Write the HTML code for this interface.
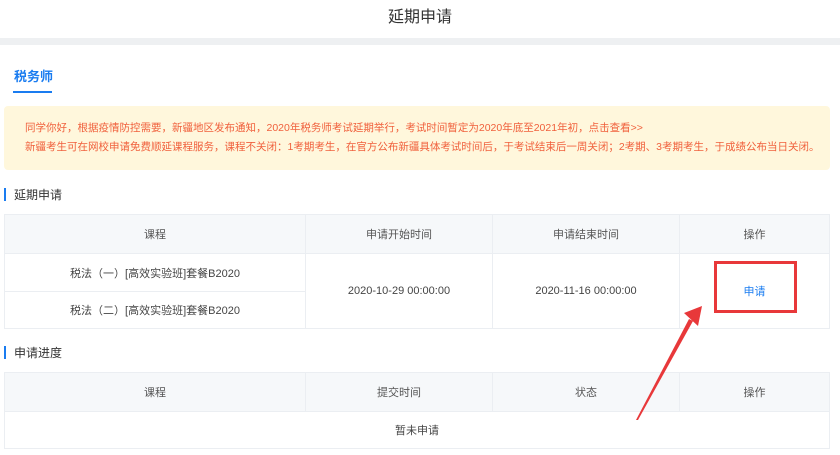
<!DOCTYPE html>
<html><head><meta charset="utf-8"><style>
*{margin:0;padding:0;box-sizing:border-box}
body{width:840px;height:455px;background:#fff;font-family:"Liberation Sans","Noto Sans CJK SC",sans-serif;position:relative;overflow:hidden;color:#333}
.abs{position:absolute}
table{border-collapse:collapse;position:absolute;left:4px;width:826px;font-size:11px;color:#444}
td{border:1px solid #ebeef2;text-align:center}
th{border:1px solid #ebeef2;background:#f6f8fa;font-weight:normal;color:#555;font-size:11px}
</style></head><body>
<div class="abs" style="top:0;left:0;width:840px;height:38px;text-align:center;line-height:36px;font-size:16px;color:#333">延期申请</div>
<div class="abs" style="top:38px;left:0;width:840px;height:7px;background:#eef0f2"></div>
<div class="abs" style="top:66px;left:14px;font-size:13px;color:#1a7cf0;font-weight:bold">税务师</div>
<div class="abs" style="top:91px;left:13px;width:39px;height:2px;background:#1a7cf0"></div>
<div class="abs" style="top:106px;left:4px;width:826px;height:64px;background:#fff7dc;border-radius:4px;color:#f0603c;font-size:10.5px;line-height:19px;padding:13px 0 0 21px">同学你好，根据疫情防控需要，新疆地区发布通知，2020年税务师考试延期举行，考试时间暂定为2020年底至2021年初，点击查看&gt;&gt;<br>新疆考生可在网校申请免费顺延课程服务，课程不关闭：1考期考生，在官方公布新疆具体考试时间后，于考试结束后一周关闭；2考期、3考期考生，于成绩公布当日关闭。</div>
<div class="abs" style="top:188px;left:4px;width:2px;height:13px;background:#1a7cf0"></div>
<div class="abs" style="top:186px;left:14px;font-size:12px;color:#333">延期申请</div>
<table style="top:214px">
<tr style="height:39px"><th style="width:301px">课程</th><th style="width:187px">申请开始时间</th><th style="width:187px">申请结束时间</th><th>操作</th></tr>
<tr style="height:38px"><td>税法（一）[高效实验班]套餐B2020</td><td rowspan="2">2020-10-29 00:00:00</td><td rowspan="2">2020-11-16 00:00:00</td><td rowspan="2" style="color:#1a7cf0">申请</td></tr>
<tr style="height:37px"><td>税法（二）[高效实验班]套餐B2020</td></tr>
</table>
<div class="abs" style="top:346px;left:4px;width:2px;height:13px;background:#1a7cf0"></div>
<div class="abs" style="top:344px;left:14px;font-size:12px;color:#333">申请进度</div>
<table style="top:372px">
<tr style="height:39px"><th style="width:301px">课程</th><th style="width:187px">提交时间</th><th style="width:187px">状态</th><th>操作</th></tr>
<tr style="height:37px"><td colspan="4">暂未申请</td></tr>
</table>
<div class="abs" style="top:261px;left:714px;width:83px;height:52px;border:3px solid #e8383a"></div>
<svg class="abs" style="top:0;left:0" width="840" height="455"><polygon points="636,420 638,420 693,321 689,319" fill="#e8383a"/><polygon points="702,306 684,313 698,326" fill="#e8383a"/></svg>
</body></html>
